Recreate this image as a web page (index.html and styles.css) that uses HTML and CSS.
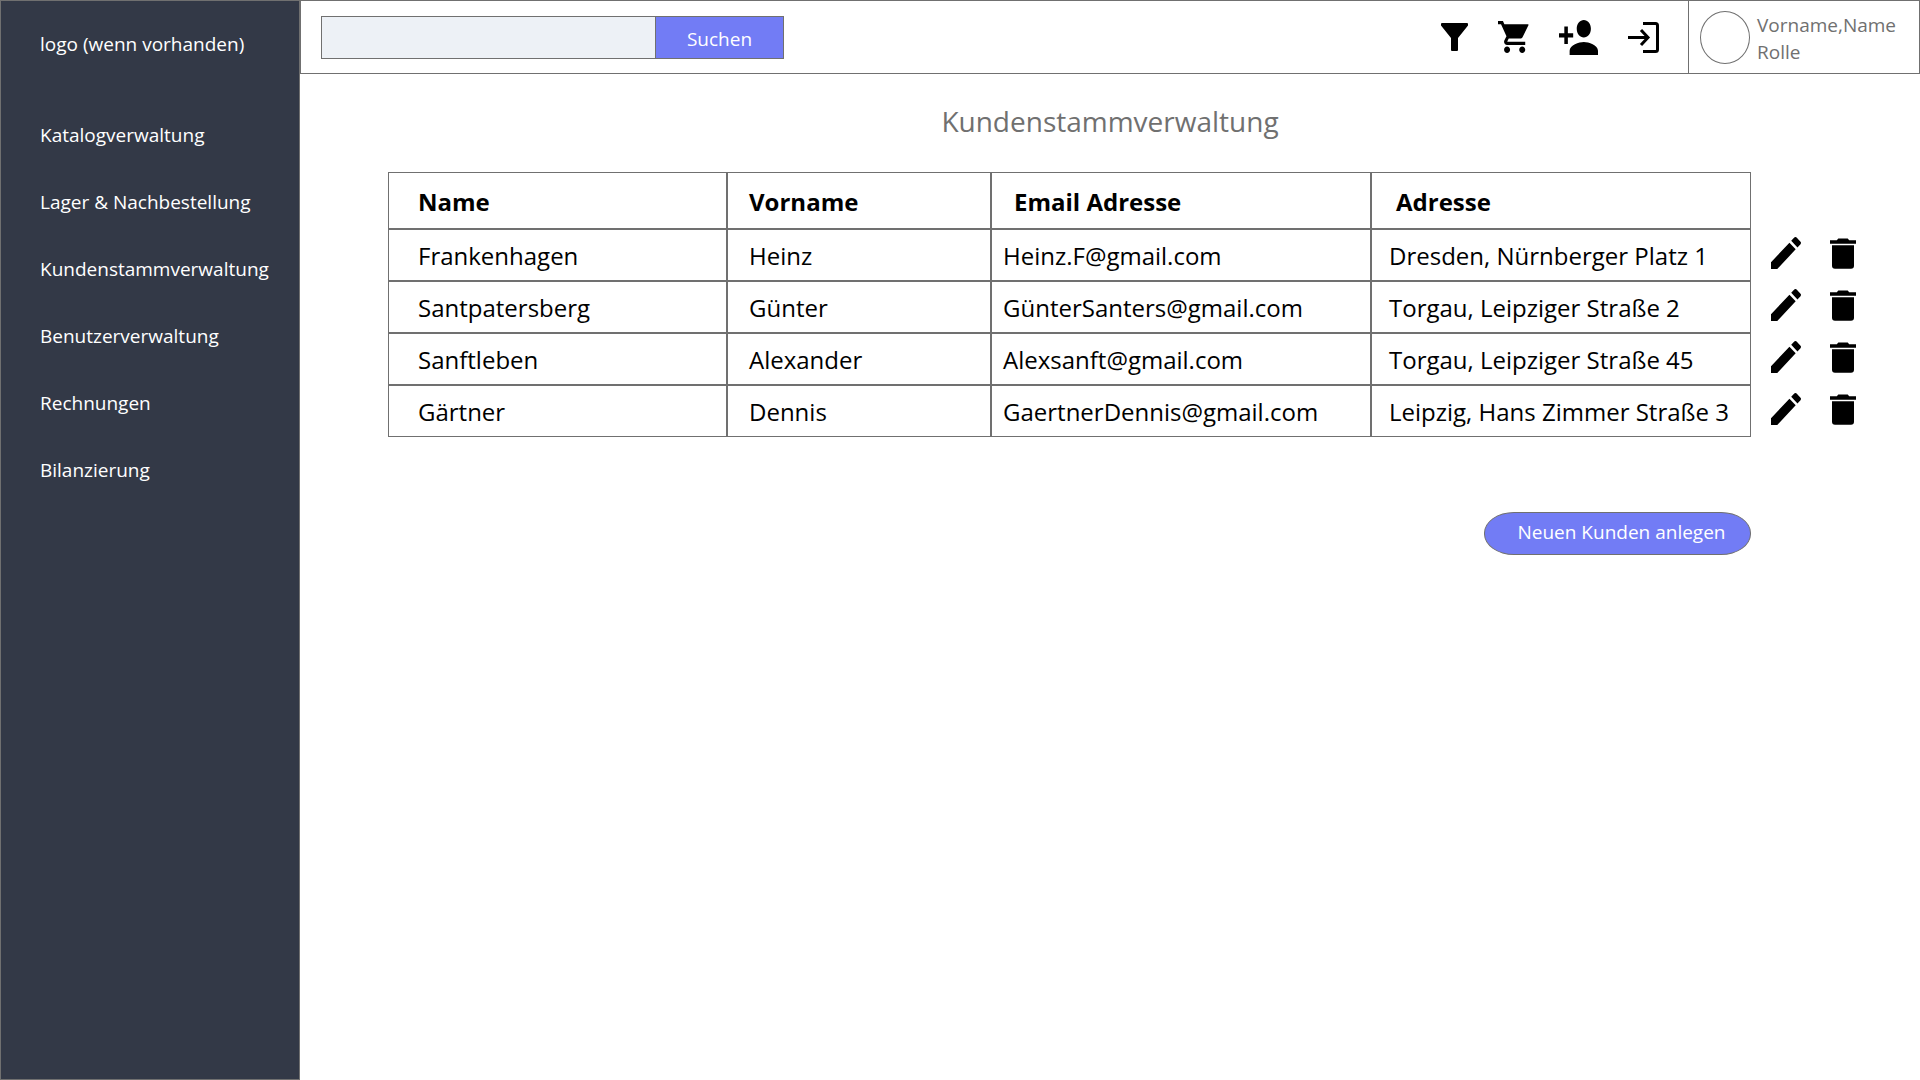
FILE: index.html
```html
<!DOCTYPE html>
<html lang="de">
<head>
<meta charset="utf-8">
<meta name="viewport" content="width=device-width, initial-scale=1">
<title>Kundenstammverwaltung</title>
<link rel="stylesheet" href="styles.css">
</head>
<body>
<svg class="sprite" aria-hidden="true">
  <symbol id="edit" viewBox="3 3 18 18" preserveAspectRatio="none"><path d="M3 17.25V21h3.75L17.81 9.94l-3.75-3.75L3 17.25zM20.71 7.04c.39-.39.39-1.02 0-1.41l-2.34-2.34c-.39-.39-1.02-.39-1.41 0l-1.83 1.83 3.75 3.75 1.83-1.83z"/></symbol>
  <symbol id="trash" viewBox="0 0 26 31"><path d="M0 2.2h6.8L8.3.4h9.4l1.5 1.8H26v3.6H0zM2 7.2h22v20.6a3 3 0 0 1-3 3H5a3 3 0 0 1-3-3z"/></symbol>
</svg>
<div class="layout">
  <aside class="sidebar">
    <div class="logo">logo (wenn vorhanden)</div>
    <nav class="menu">
      <a href="#">Katalogverwaltung</a>
      <a href="#">Lager &amp; Nachbestellung</a>
      <a href="#">Kundenstammverwaltung</a>
      <a href="#">Benutzerverwaltung</a>
      <a href="#">Rechnungen</a>
      <a href="#">Bilanzierung</a>
    </nav>
  </aside>
  <div class="page">
    <header class="topbar">
      <form class="search" role="search">
        <input type="search" aria-label="Suche">
        <button type="button">Suchen</button>
      </form>
      <div class="tools">
        <button type="button" aria-label="Filter"><svg width="27" height="28" viewBox="0 0 27 28"><path d="M1 0h25q1 0 1 1v1.5L17 15v12q0 1-1 1h-5q-1 0-1-1V15L0 2.500V1q0-1 1-1z"/></svg></button>
        <button type="button" aria-label="Warenkorb"><svg width="31" height="32" viewBox="1 2 20.500 20" preserveAspectRatio="none"><path d="M7 18c-1.100 0-1.990.9-1.990 2S5.900 22 7 22s2-.9 2-2-.9-2-2-2zM1 2v2h2l3.600 7.590-1.350 2.450c-.16.28-.25.61-.25.96 0 1.100.9 2 2 2h12v-2H7.420c-.14 0-.25-.11-.25-.25l.03-.12.9-1.630h7.450c.75 0 1.410-.41 1.750-1.030l3.900-7.490c.12-.3-.1-.48-.4-.48H5.210l-.94-2H1zm16 16c-1.100 0-1.990.9-1.990 2s.89 2 1.990 2 2-.9 2-2-.9-2-2-2z"/></svg></button>
        <button type="button" aria-label="Benutzer hinzufügen"><svg width="39" height="35" viewBox="1 4 22 16" preserveAspectRatio="none"><path d="M15 12c2.210 0 4-1.790 4-4s-1.790-4-4-4-4 1.790-4 4 1.790 4 4 4zm-9-2V7H4v3H1v2h3v3h2v-3h3v-2H6zm9 4c-2.670 0-8 1.340-8 4v2h16v-2c0-2.660-5.330-4-8-4z"/></svg></button>
        <button type="button" aria-label="Anmelden"><svg width="31" height="31" viewBox="0 0 31 31" fill="none" stroke="#000" stroke-width="3"><path d="M15 1.500h12.500a2 2 0 0 1 2 2v24a2 2 0 0 1-2 2H15M0 15.500h20M13 8l7 7.500-7 7.500"/></svg></button>
      </div>
      <div class="profile">
        <span class="avatar"></span>
        <div class="who"><div>Vorname,Name</div><div>Rolle</div></div>
      </div>
    </header>
    <main>
      <h1>Kundenstammverwaltung</h1>
      <div class="content">
        <table>
          <colgroup><col class="c-name"><col class="c-first"><col class="c-wide"><col class="c-wide"><col class="c-actions"></colgroup>
          <thead>
            <tr><th scope="col">Name</th><th scope="col">Vorname</th><th scope="col">Email Adresse</th><th scope="col">Adresse</th><td class="actions"></td></tr>
          </thead>
          <tbody>
            <tr><td>Frankenhagen</td><td>Heinz</td><td>Heinz.F@gmail.com</td><td>Dresden, Nürnberger Platz 1</td>
              <td class="actions"><div><button type="button" aria-label="Bearbeiten"><svg width="30" height="32"><use href="#edit"/></svg></button><button type="button" aria-label="Löschen"><svg width="26" height="31"><use href="#trash"/></svg></button></div></td></tr>
            <tr><td>Santpatersberg</td><td>Günter</td><td>GünterSanters@gmail.com</td><td>Torgau, Leipziger Straße 2</td>
              <td class="actions"><div><button type="button" aria-label="Bearbeiten"><svg width="30" height="32"><use href="#edit"/></svg></button><button type="button" aria-label="Löschen"><svg width="26" height="31"><use href="#trash"/></svg></button></div></td></tr>
            <tr><td>Sanftleben</td><td>Alexander</td><td>Alexsanft@gmail.com</td><td>Torgau, Leipziger Straße 45</td>
              <td class="actions"><div><button type="button" aria-label="Bearbeiten"><svg width="30" height="32"><use href="#edit"/></svg></button><button type="button" aria-label="Löschen"><svg width="26" height="31"><use href="#trash"/></svg></button></div></td></tr>
            <tr><td>Gärtner</td><td>Dennis</td><td>GaertnerDennis@gmail.com</td><td>Leipzig, Hans Zimmer Straße 3</td>
              <td class="actions"><div><button type="button" aria-label="Bearbeiten"><svg width="30" height="32"><use href="#edit"/></svg></button><button type="button" aria-label="Löschen"><svg width="26" height="31"><use href="#trash"/></svg></button></div></td></tr>
          </tbody>
        </table>
        <div class="footer-row"><button class="create" type="button">Neuen Kunden anlegen</button></div>
      </div>
    </main>
  </div>
</div>
</body>
</html>
```
FILE: styles.css
```css
* { box-sizing: border-box; }

body {
  margin: 0;
  background: #fff;
  color: #000;
  font-family: "Open Sans", "Noto Sans", sans-serif;
  font-size: 19px;
}

button, input { font: inherit; color: inherit; margin: 0; }
button { cursor: pointer; padding: 0; }
svg { display: block; }
.sprite { position: absolute; width: 0; height: 0; }

.layout { display: flex; min-height: 100vh; }

.sidebar {
  flex: 0 0 300px;
  padding: 29px 0 0 39px;
  background: #333947;
  border: 1px solid #707070;
  color: #fff;
}
.logo { line-height: 28px; }
.menu { display: flex; flex-direction: column; gap: 39px; margin-top: 63px; }
.menu a { color: inherit; text-decoration: none; line-height: 28px; white-space: nowrap; }

.page { flex: 1; min-width: 0; }

.topbar {
  display: flex;
  height: 74px;
  border: 1px solid #707070;
}
.search { display: flex; flex: 0 1 463px; height: 43px; margin: 15px 0 0 20px; }
.search input {
  flex: 1;
  min-width: 0;
  padding: 0 12px;
  background: #edf1f6;
  border: 1px solid #707070;
  border-right: 0;
  border-radius: 0;
  appearance: none;
}
.search button {
  flex: 0 0 129px;
  padding-top: 2px;
  background: #727cf5;
  border: 1px solid #707070;
  color: #fff;
}
.tools {
  display: flex;
  align-items: center;
  gap: 30px;
  margin-left: auto;
  padding-right: 29px;
}
.tools button { background: none; border: 0; }

.profile {
  display: flex;
  align-items: center;
  gap: 7px;
  flex: 0 0 231px;
  padding-left: 11px;
  border-left: 1px solid #707070;
  color: #707070;
}
.avatar { width: 50px; height: 53px; border: 1px solid #707070; border-radius: 50%; }
.who { padding-top: 3px; line-height: 27px; }

h1 {
  margin: 28px 0 0;
  color: #707070;
  font-size: 28px;
  font-weight: 400;
  line-height: 38px;
  text-align: center;
}

.content { padding: 32px 40px 40px 88px; overflow-x: auto; }

table {
  width: 100%;
  table-layout: fixed;
  border-collapse: separate;
  border-spacing: 0;
  font-size: 24px;
  line-height: 32px;
}
.c-name { width: 339px; }
.c-first { width: 264px; }
.c-wide { width: 380px; }
.c-actions { width: 129px; }

th, td {
  height: 52px;
  padding: 2px 0 0 17px;
  border: 1px solid #707070;
  text-align: left;
  white-space: nowrap;
}
th { height: 57px; padding-left: 24px; font-weight: 700; }
th:first-child, td:first-child { padding-left: 29px; }
th:nth-child(2), td:nth-child(2) { padding-left: 21px; }
th:nth-child(3) { padding-left: 22px; }
td:nth-child(3) { padding-left: 11px; }
td.actions { padding: 0 0 4px 20px; border: 0; }
.actions div { display: flex; align-items: center; gap: 29px; }
.actions button { background: none; border: 0; }

.footer-row { display: flex; justify-content: flex-end; margin: 75px 129px 0 0; }
.create {
  width: 267px;
  height: 43px;
  padding: 0 0 4px 8px;
  background: #727cf5;
  border: 1px solid #707070;
  border-radius: 30px / 21px;
  color: #fff;
}
```
